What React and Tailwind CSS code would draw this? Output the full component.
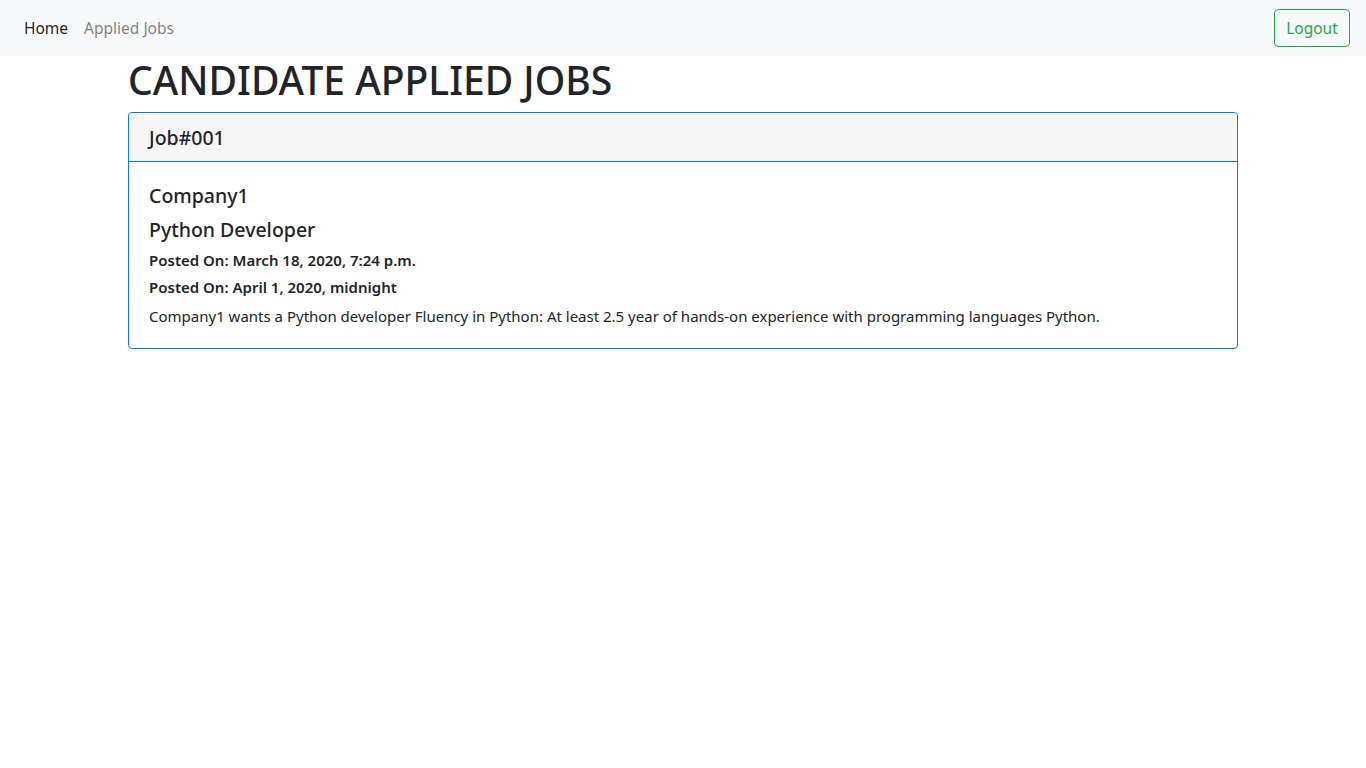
const jobs = [
  {
    id: "001",
    company: "Company1",
    title: "Python Developer",
    posted: "March 18, 2020, 7:24 p.m.",
    lastDate: "April 1, 2020, midnight",
    description:
      "Company1 wants a Python developer Fluency in Python: At least 2.5 year of hands-on experience with programming languages Python.",
  },
];

const App = () => {
  return (
    <div className="min-h-screen bg-white text-[#212529] font-['Noto_Sans',sans-serif]">
      <nav className="h-14 bg-[#f8f9fa] px-4 flex items-center justify-between">
        <ul className="flex text-[15.5px]">
          <li>
            <a href="#" className="block px-2 pt-[9px] pb-[7px] text-black/90">Home</a>
          </li>
          <li>
            <a href="#" className="block px-2 pt-[9px] pb-[7px] text-black/50">Applied Jobs</a>
          </li>
        </ul>
        <button className="h-[38px] w-[76px] pt-px border border-[#28a745] text-[#28a745] rounded text-[15.5px]">
          Logout
        </button>
      </nav>

      <main className="max-w-[1140px] mx-auto px-[15px]">
        <h1 className="text-[39px] leading-[48px] font-medium mb-2">CANDIDATE APPLIED JOBS</h1>

        {jobs.map((job) => (
          <div key={job.id} className="border border-[#007bff] rounded">
            <div className="bg-[#f7f7f7] border-b border-[#007bff] px-5 pt-[13px] pb-[11px] rounded-t">
              <h5 className="text-[19.5px] leading-6 font-medium">Job#{job.id}</h5>
            </div>
            <div className="p-5">
              <h5 className="text-[19.5px] leading-6 font-medium pt-[2px] mb-[10px]">{job.company}</h5>
              <h5 className="text-[19.5px] leading-6 font-medium mb-2">{job.title}</h5>
              <h6 className="text-[15px] leading-[19px] font-semibold pt-px mb-2">Posted On: {job.posted}</h6>
              <h6 className="text-[15px] leading-[19px] font-semibold mb-[7px]">Posted On: {job.lastDate}</h6>
              <p className="text-[15px] leading-6">{job.description}</p>
            </div>
          </div>
        ))}
      </main>
    </div>
  );
};

export default App;
